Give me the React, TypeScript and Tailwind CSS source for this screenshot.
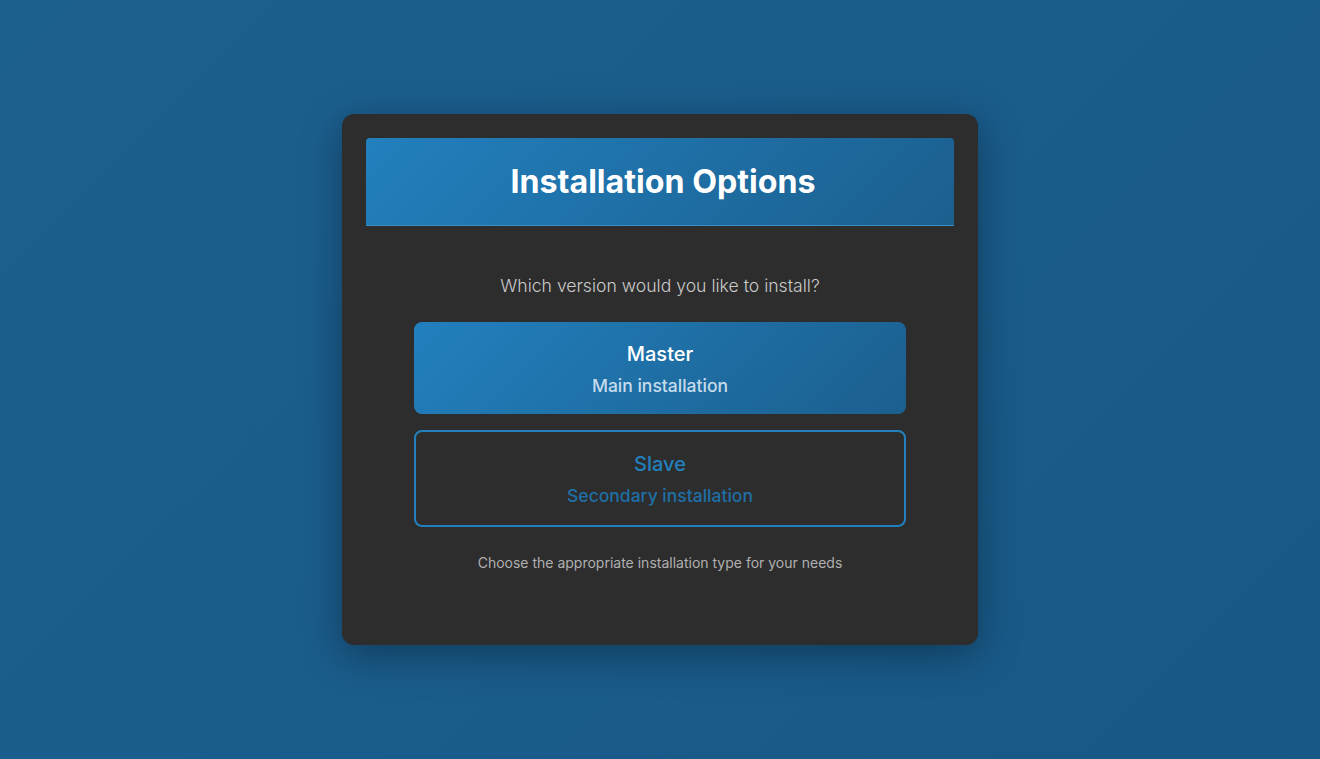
export default function App() {
  return (
    <div className="min-h-screen w-full flex items-center justify-center bg-linear-135 from-[#1c6090] to-[#185887] font-['Inter',sans-serif]">
      <div className="w-[636px] rounded-xl bg-[#2d2d2d] p-6 pb-[72px] shadow-[0_10px_40px_rgba(0,0,0,0.35)]">
        <div className="h-[88px] pt-0.5 pl-1.5 rounded-t bg-linear-135 from-[#2280be] to-[#1b5f8e] border-b border-[#3a8fc8] flex items-center justify-center">
          <h1 className="text-[32.2px] font-bold text-white">Installation Options</h1>
        </div>

        <div className="flex flex-col items-center px-12 pt-[46px]">
          <p className="text-[17.6px] leading-[27px] font-light text-[#cacaca]">Which version would you like to install?</p>

          <div className="mt-[23px] w-full flex flex-col gap-4">
            <button className="w-full h-[92px] pt-0.5 rounded-lg bg-linear-135 from-[#2280be] to-[#1b5f8e] flex flex-col items-center justify-center">
              <span className="text-xl leading-7 font-medium text-white">Master</span>
              <span className="mt-1.5 text-[17.5px] leading-6 font-medium text-[#c6dcec]">Main installation</span>
            </button>
            <button className="w-full h-[97px] rounded-lg border-2 border-[#2280be] bg-transparent flex flex-col items-center justify-center">
              <span className="text-xl leading-7 font-medium text-[#2280be]">Slave</span>
              <span className="mt-1.5 text-[17.5px] leading-6 font-medium text-[#1f6fa6]">Secondary installation</span>
            </button>
          </div>

          <p className="mt-[26px] text-sm leading-5 text-[#b0b0b0]">Choose the appropriate installation type for your needs</p>
        </div>
      </div>
    </div>
  );
}
